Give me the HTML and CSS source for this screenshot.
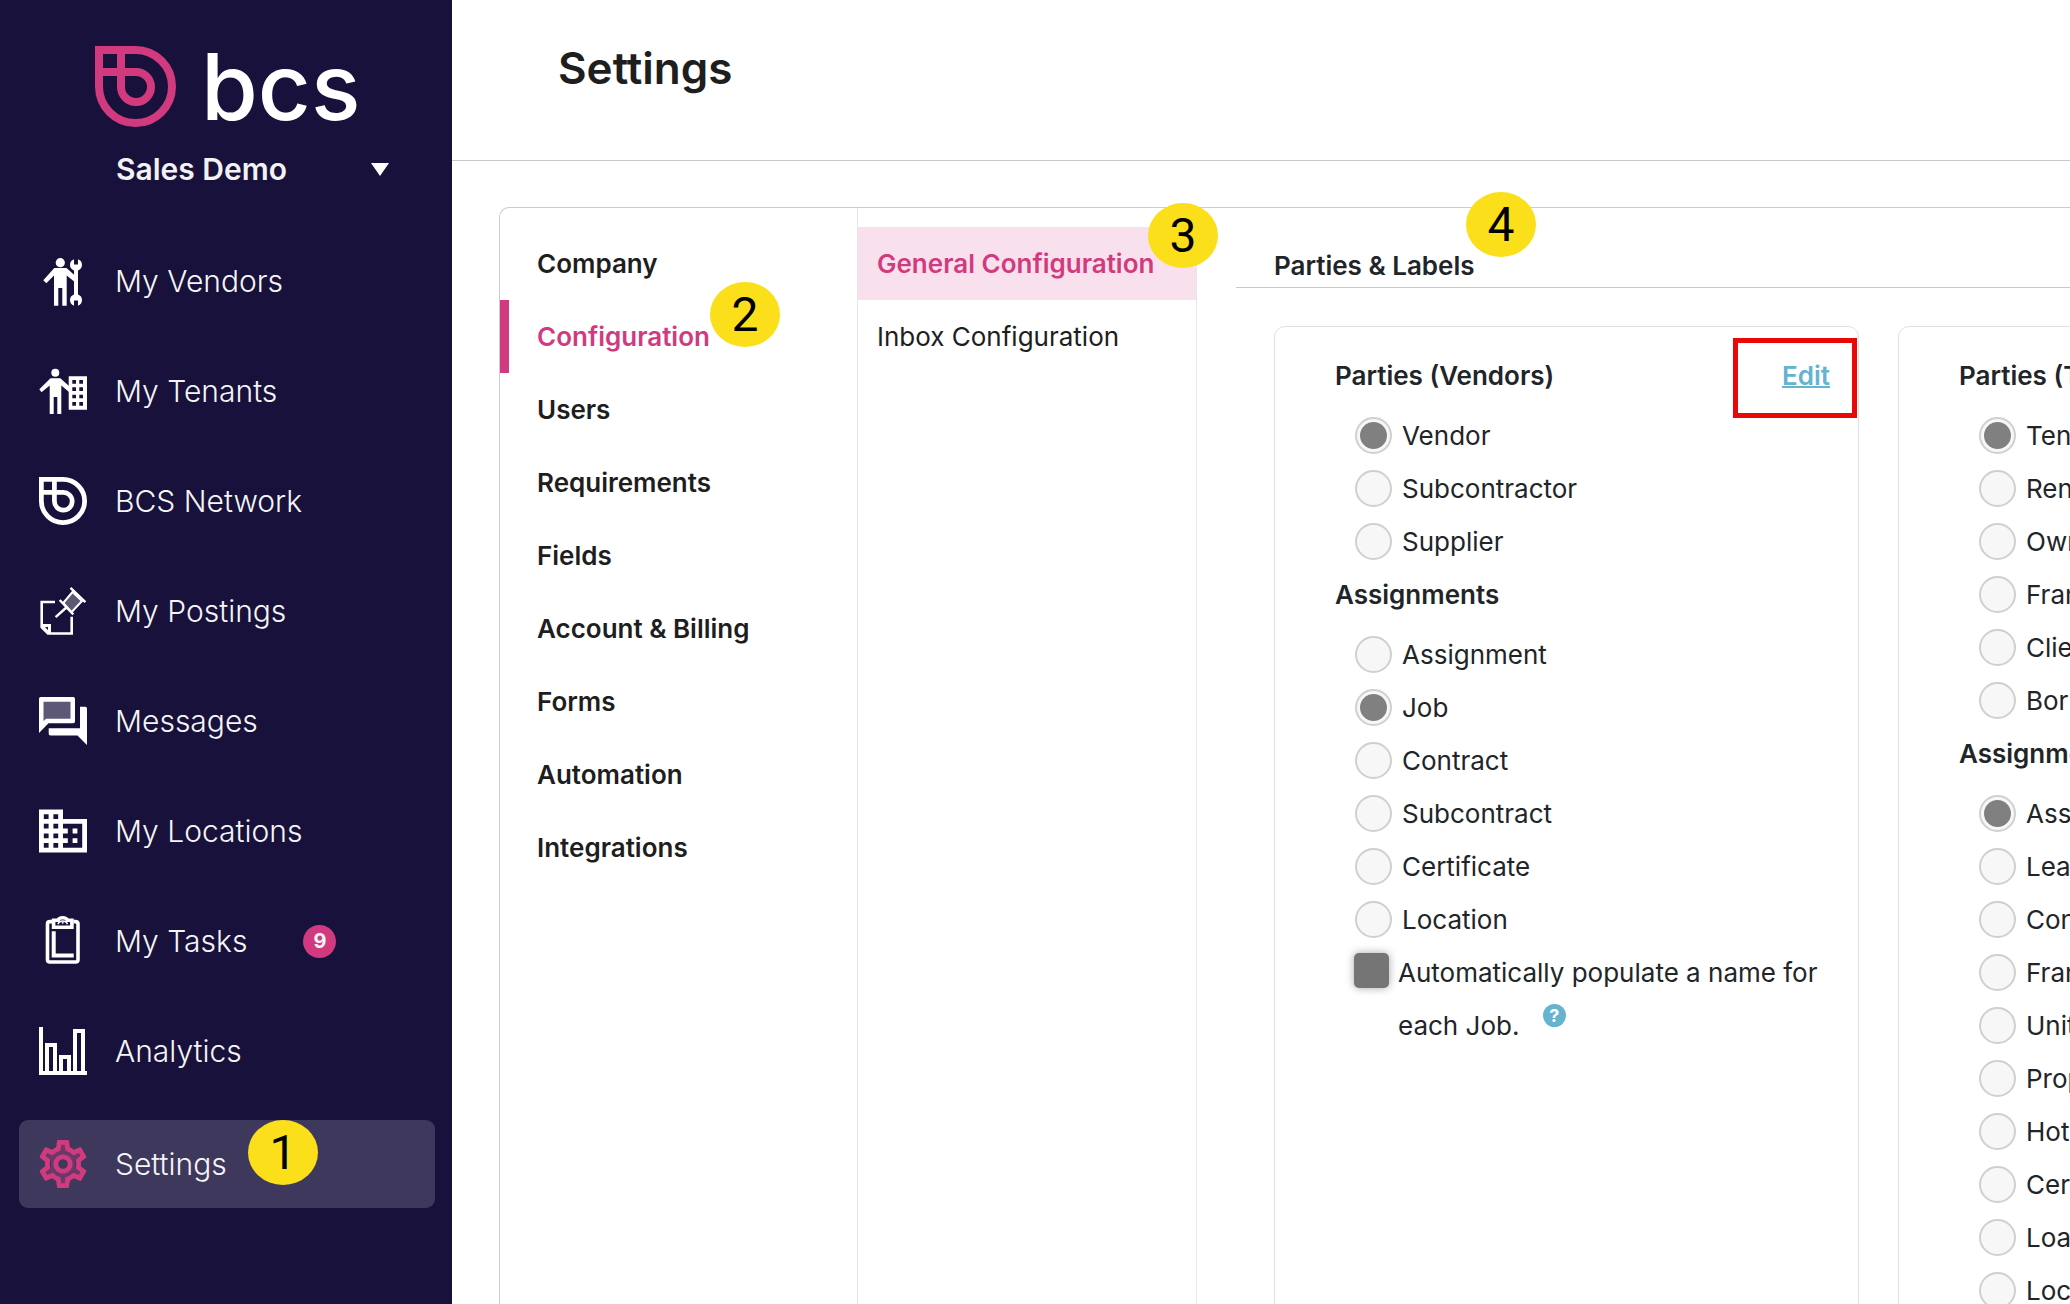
FILE: index.html
```html
<!DOCTYPE html>
<html lang="en">
<head>
    <meta charset="UTF-8">
    <meta name="viewport" content="width=device-width, initial-scale=1.0">
    <title>Settings - bcs</title>
    <link rel="stylesheet" href="styles.css">
</head>
<body>
    <!-- shared brand mark -->
    <svg class="sprite" aria-hidden="true">
        <symbol id="mark" viewBox="0 0 81 81">
            <g fill="none" stroke="currentColor" stroke-width="8">
                <path d="M4 4H40.5A36.5 36.5 0 1 1 4 40.5Z"/>
                <path d="M26 4V40.5A15 15 0 1 0 40.5 26H4"/>
            </g>
        </symbol>
    </svg>

    <aside class="sidebar">
        <div class="logo">
            <svg class="logo-mark"><use href="#mark"/></svg>
            <span class="logo-text">bcs</span>
        </div>
        <button type="button" class="account">
            <span>Sales Demo</span>
            <svg class="caret" viewBox="0 0 18 13"><path d="M0 0H18L9 13Z" fill="#fff"/></svg>
        </button>

        <nav class="menu">
            <a href="#" class="menu-item">
                <svg class="icon" viewBox="0 0 48 48" fill="#fff">
                    <circle cx="21.3" cy="5.7" r="4.6"/>
                    <path d="M15.3 11H27.5L37 19.5V26L27.7 18.5V48.7H23.3V31H19.3V48.7H15V18.5L7.3 26.3L4.3 23.3Z"/>
                    <path d="M35 2.2V7.5H39V2.2A6 6 0 0 1 39 13.5V37.4A6 6 0 0 1 39 48.7V43.4H35V48.7A6 6 0 0 1 35 37.4V13.5A6 6 0 0 1 35 2.2Z"/>
                </svg>
                <span>My Vendors</span>
            </a>
            <a href="#" class="menu-item">
                <svg class="icon" viewBox="0 0 48 48" fill="#fff">
                    <circle cx="16.3" cy="5.7" r="4"/>
                    <path d="M11.5 11.3H21.3L30 19V25L22.3 18.5V47H18.3V30H14.7V47H10.7V18.5L2.5 25.3L.3 22.3Z"/>
                    <path fill-rule="evenodd" d="M29.7 9.3H48V42.7H29.7ZM33.3 13V16.7H37V13ZM40.3 13V16.7H44V13ZM33.3 20.3V24H37V20.3ZM40.3 20.3V24H44V20.3ZM33.3 27.7V31.3H37V27.7ZM40.3 27.7V31.3H44V27.7ZM33.3 35V38.7H37V35ZM40.3 35V38.7H44V35Z"/>
                </svg>
                <span>My Tenants</span>
            </a>
            <a href="#" class="menu-item">
                <svg class="icon"><use href="#mark"/></svg>
                <span>BCS Network</span>
            </a>
            <a href="#" class="menu-item">
                <svg class="icon" viewBox="0 0 48 48" fill="none" stroke="#fff" stroke-width="2.6">
                    <path d="M16 15H2.7V40.3L9 46.5H32.7V29.7"/>
                    <path d="M2.7 38.5H10.5V46.5" stroke-width="3"/>
                    <path d="M4.5 40L9 44.5" stroke-width="2"/>
                    <path d="M24.2 16L33.5 5L43 14L32.5 25.2Z" fill="#fff" fill-opacity=".3" stroke-width="2"/>
                    <path d="M31.5 .9L46.4 15.2M20.7 13L34.3 27.3M16.6 30.2L28.5 19.5" stroke-width="2.4"/>
                </svg>
                <span>My Postings</span>
            </a>
            <a href="#" class="menu-item">
                <svg class="icon" viewBox="0 0 48 48" fill="#fff">
                    <path d="M4 4H32V22H8L4 24Z" fill-opacity=".3"/>
                    <path fill-rule="evenodd" d="M1.8 0H34.2A1.8 1.8 0 0 1 36 1.8V24.5A1.8 1.8 0 0 1 34.2 26.3H9.5L0 36V1.8A1.8 1.8 0 0 1 1.8 0ZM4.5 4.8V24L7 21.8H31.5V4.8Z"/>
                    <path d="M41 9.7H46.3A1.7 1.7 0 0 1 48 11.4V48L38.5 38.5H11.4A1.7 1.7 0 0 1 9.7 36.8V31.2H41Z"/>
                </svg>
                <span>Messages</span>
            </a>
            <a href="#" class="menu-item">
                <svg class="icon" viewBox="2 2 20 20" fill="#fff">
                    <path d="M12 7V3H2v18h20V7H12zM6 19H4v-2h2v2zm0-4H4v-2h2v2zm0-4H4V9h2v2zm0-4H4V5h2v2zm4 12H8v-2h2v2zm0-4H8v-2h2v2zm0-4H8V9h2v2zm0-4H8V5h2v2zm10 12h-8v-2h2v-2h-2v-2h2v-2h-2V9h8v10zm-2-8h-2v2h2v-2zm0 4h-2v2h2v-2z"/>
                </svg>
                <span>My Locations</span>
            </a>
            <a href="#" class="menu-item">
                <svg class="icon" viewBox="0 0 48 48" fill="none" stroke="#fff">
                    <path d="M13 4.6H11Q8.5 4.6 8.5 7V42.7Q8.5 45 11 45H36.5Q39 45 39 42.7V7Q39 4.6 36.5 4.6H34.5" stroke-width="3.6"/>
                    <path d="M14.6 3.2H19Q20 .8 23.7 .8T28.4 3.2H32.9V10.2H14.6Z" stroke-width="3.6"/>
                    <path d="M19 7.2Q20 4 23.7 4T28.4 7.2" stroke-width="1.5"/>
                    <circle cx="23.7" cy="5.8" r="1" fill="#fff" stroke="none"/>
                    <path d="M14.7 14.3V38.4H34.7" stroke-width="4"/>
                </svg>
                <span>My Tasks</span>
                <span class="count">9</span>
            </a>
            <a href="#" class="menu-item">
                <svg class="icon" viewBox="0 0 48 48" fill="none" stroke="#fff" stroke-width="4">
                    <path d="M2 0V46H48M8 46V18H16V46M22 46V30H30V46M36 46V4H44V46"/>
                </svg>
                <span>Analytics</span>
            </a>
            <a href="#" class="menu-item active">
                <svg class="icon" viewBox="2 2 20 20" fill="currentColor">
                    <path fill-opacity=".3" fill-rule="evenodd" d="M13 3.5h-2l-.5 3-1.800 1-2.900-1.100-1.100 1.900 2.300 2-.1 1.700.1 1.700-2.300 2 1.100 1.900 2.900-1.100 1.800 1 .5 3h2l.5-3 1.800-1 2.900 1.100 1.100-1.900-2.300-2 .1-1.700-.1-1.700 2.300-2-1.100-1.900-2.900 1.100-1.800-1zM12 9a3 3 0 1 1 0 6 3 3 0 0 1 0-6z"/>
                    <path d="M19.430 12.980c.04-.32.07-.64.07-.98 0-.34-.03-.66-.07-.98l2.110-1.650c.19-.15.24-.42.12-.64l-2-3.460c-.09-.16-.26-.25-.44-.25-.06 0-.12.01-.17.03l-2.490 1c-.52-.4-1.080-.73-1.690-.98l-.38-2.650C14.460 2.180 14.250 2 14 2h-4c-.25 0-.46.18-.49.42l-.38 2.650c-.61.25-1.170.59-1.690.98l-2.490-1c-.06-.02-.12-.03-.18-.03-.17 0-.34.09-.43.25l-2 3.460c-.13.22-.07.49.12.64l2.110 1.650c-.04.32-.07.65-.07.98 0 .33.03.66.07.98l-2.110 1.650c-.19.15-.24.42-.12.64l2 3.460c.09.16.26.25.44.25.06 0 .12-.01.17-.03l2.490-1c.52.4 1.080.73 1.690.98l.38 2.650c.03.24.24.42.49.42h4c.25 0 .46-.18.49-.42l.38-2.650c.61-.25 1.170-.59 1.690-.98l2.490 1c.06.02.12.03.18.03.17 0 .34-.09.43-.25l2-3.460c.12-.22.07-.49-.12-.64l-2.110-1.650zm-1.980-1.710c.04.31.05.52.05.73 0 .21-.02.43-.05.73l-.14 1.130.89.7 1.080.84-.7 1.210-1.270-.51-1.040-.42-.9.68c-.43.32-.84.56-1.250.73l-1.060.43-.16 1.130-.2 1.350h-1.400l-.19-1.350-.16-1.130-1.060-.43c-.43-.18-.83-.41-1.230-.71l-.91-.7-1.060.43-1.270.51-.7-1.210 1.080-.84.89-.7-.14-1.130c-.03-.31-.05-.54-.05-.74s.02-.43.05-.73l.14-1.130-.89-.7-1.080-.84.7-1.210 1.270.51 1.040.42.9-.68c.43-.32.84-.56 1.250-.73l1.060-.43.16-1.130.2-1.350h1.390l.19 1.350.16 1.130 1.060.43c.43.18.83.41 1.230.71l.91.7 1.060-.43 1.270-.51.7 1.210-1.070.85-.89.7.14 1.130zM12 8c-2.210 0-4 1.790-4 4s1.790 4 4 4 4-1.790 4-4-1.790-4-4-4zm0 6c-1.100 0-2-.9-2-2s.9-2 2-2 2 .9 2 2-.9 2-2 2z"/>
                </svg>
                <span>Settings</span>
            </a>
        </nav>
    </aside>

    <main class="main">
        <header class="page-header">
            <h1>Settings</h1>
        </header>

        <div class="panel">
            <nav class="tabs">
                <a href="#">Company</a>
                <a href="#" class="active">Configuration</a>
                <a href="#">Users</a>
                <a href="#">Requirements</a>
                <a href="#">Fields</a>
                <a href="#">Account &amp; Billing</a>
                <a href="#">Forms</a>
                <a href="#">Automation</a>
                <a href="#">Integrations</a>
            </nav>

            <nav class="subtabs">
                <a href="#" class="active">General Configuration</a>
                <a href="#">Inbox Configuration</a>
            </nav>

            <section class="content">
                <h2>Parties &amp; Labels</h2>
                <div class="cards">
                    <form class="card">
                        <div class="card-head">
                            <h3>Parties (Vendors)</h3>
                            <a href="#" class="edit">Edit</a>
                        </div>
                        <div class="options">
                            <label><input type="radio" name="vendorParty" checked>Vendor</label>
                            <label><input type="radio" name="vendorParty">Subcontractor</label>
                            <label><input type="radio" name="vendorParty">Supplier</label>
                        </div>
                        <h3>Assignments</h3>
                        <div class="options">
                            <label><input type="radio" name="vendorAssign">Assignment</label>
                            <label><input type="radio" name="vendorAssign" checked>Job</label>
                            <label><input type="radio" name="vendorAssign">Contract</label>
                            <label><input type="radio" name="vendorAssign">Subcontract</label>
                            <label><input type="radio" name="vendorAssign">Certificate</label>
                            <label><input type="radio" name="vendorAssign">Location</label>
                        </div>
                        <div class="auto-name">
                            <input type="checkbox" id="autoName">
                            <div>
                                <label for="autoName">Automatically populate a name for<br>each Job.</label>
                                <button type="button" class="help">?</button>
                            </div>
                        </div>
                    </form>

                    <form class="card">
                        <div class="card-head">
                            <h3>Parties (Tenants)</h3>
                        </div>
                        <div class="options">
                            <label><input type="radio" name="tenantParty" checked>Tenant</label>
                            <label><input type="radio" name="tenantParty">Renter</label>
                            <label><input type="radio" name="tenantParty">Owner</label>
                            <label><input type="radio" name="tenantParty">Franchisee</label>
                            <label><input type="radio" name="tenantParty">Client</label>
                            <label><input type="radio" name="tenantParty">Borrower</label>
                        </div>
                        <h3>Assignments</h3>
                        <div class="options">
                            <label><input type="radio" name="tenantAssign" checked>Assignment</label>
                            <label><input type="radio" name="tenantAssign">Lease</label>
                            <label><input type="radio" name="tenantAssign">Contract</label>
                            <label><input type="radio" name="tenantAssign">Franchise</label>
                            <label><input type="radio" name="tenantAssign">Unit</label>
                            <label><input type="radio" name="tenantAssign">Property</label>
                            <label><input type="radio" name="tenantAssign">Hotel</label>
                            <label><input type="radio" name="tenantAssign">Certificate</label>
                            <label><input type="radio" name="tenantAssign">Loan</label>
                            <label><input type="radio" name="tenantAssign">Location</label>
                        </div>
                    </form>
                </div>
            </section>
        </div>
    </main>

    <!-- walkthrough steps -->
    <span class="step step-1">1</span>
    <span class="step step-2">2</span>
    <span class="step step-3">3</span>
    <span class="step step-4">4</span>
    <span class="highlight"></span>
</body>
</html>
```

FILE: styles.css
```css
* {
    box-sizing: border-box;
}

body {
    position: relative;
    display: flex;
    height: 100vh;
    margin: 0;
    overflow: hidden;
    font-family: Inter, "Liberation Sans", sans-serif;
    font-size: 26px;
    color: #212529;
    background-color: #fff;
}

a {
    color: inherit;
    text-decoration: none;
}

h1, h2, h3 {
    margin: 0;
    font-weight: 600;
}

button {
    padding: 0;
    border: none;
    background: none;
    font-family: inherit;
    cursor: pointer;
}

.sprite {
    position: absolute;
    width: 0;
    height: 0;
}

/* sidebar */
.sidebar {
    flex: none;
    width: 452px;
    padding: 46px 17px 0 19px;
    background-color: #17113b;
    color: #f5f5f5;
}

.logo {
    display: flex;
    align-items: center;
    height: 81px;
    padding-left: 76px;
    gap: 25px;
}

.logo-mark {
    width: 81px;
    height: 81px;
    color: #d13a7f;
}

.logo-text {
    font-size: 92px;
    font-weight: 500;
    line-height: 80px;
    color: #fff;
}

.account {
    display: flex;
    align-items: center;
    justify-content: space-between;
    width: 100%;
    height: 84px;
    padding: 0 46px 0 97px;
    color: #f2f2f2;
    font-size: 30px;
    font-weight: 600;
}

.caret {
    width: 18px;
    height: 13px;
}

.menu {
    display: flex;
    flex-direction: column;
    gap: 22px;
    padding-top: 26px;
}

.menu-item {
    display: flex;
    align-items: center;
    height: 88px;
    padding-left: 20px;
    gap: 28px;
    border-radius: 9px;
    font-size: 30px;
    font-weight: 300;
}

.menu-item.active {
    margin-top: 3px;
    background-color: #3e385c;
}

.icon {
    flex: none;
    width: 48px;
    height: 48px;
    overflow: visible;
    color: #fff;
}

.active .icon {
    color: #d13a7f;
}

.count {
    width: 33px;
    margin-left: 28px;
    border-radius: 50%;
    background-color: #d13a7f;
    font-size: 20px;
    font-weight: 700;
    line-height: 33px;
    text-align: center;
}

/* main area */
.main {
    flex: 1;
    min-width: 0;
    display: flex;
    flex-direction: column;
}

.page-header {
    flex: none;
    height: 161px;
    padding: 38px 106px;
    border-bottom: 1px solid #c5c8cc;
}

.page-header h1 {
    color: #1e1e1e;
    font-size: 44px;
    line-height: 60px;
}

.panel {
    flex: 1 0 auto;
    display: flex;
    margin: 46px 0 0 47px;
    border: 1px solid #ccc;
    border-width: 1px 0 0 1px;
    border-radius: 10px 0 0 0;
}

.tabs,
.subtabs {
    flex: none;
    padding-top: 19px;
    border-right: 1px solid #e6e6e6;
    color: #1e1e1e;
    line-height: 73px;
}

.tabs {
    width: 358px;
    font-weight: 600;
}

.subtabs {
    width: 339px;
}

.tabs a,
.subtabs a {
    display: block;
}

.tabs a {
    padding-left: 28px;
    border-left: 9px solid transparent;
}

.tabs .active {
    border-left-color: #d13a7f;
    color: #d13a7f;
}

.subtabs a {
    padding-left: 19px;
}

.subtabs .active {
    background-color: #f8e1ec;
    color: #d13a7f;
    font-weight: 600;
}

.content {
    flex: 1;
    min-width: 0;
    margin-left: 39px;
    padding-top: 38px;
}

.content h2 {
    padding: 0 0 1px 38px;
    border-bottom: 1px solid #c8c8c8;
    font-size: 26px;
    line-height: 40px;
}

.cards {
    display: flex;
    gap: 39px;
    padding: 38px 0 0 38px;
}

.card {
    flex: none;
    width: 585px;
    padding: 22px 28px 28px 60px;
    border: 1px solid #e0e0e0;
    border-radius: 11px;
}

.card-head {
    display: flex;
    justify-content: space-between;
}

.card h3 {
    margin-bottom: 7px;
    font-size: 26px;
    line-height: 53px;
}

.edit {
    color: #64b3cf;
    font-weight: 600;
    line-height: 53px;
    text-decoration: underline;
    text-decoration-thickness: 2px;
}

.options {
    padding-left: 20px;
}

.options label {
    display: flex;
    align-items: center;
    height: 53px;
    gap: 10px;
}

input[type="radio"] {
    flex: none;
    appearance: none;
    display: grid;
    place-items: center;
    width: 37px;
    height: 37px;
    margin: 0;
    border: 2px solid #d0d0d0;
    border-radius: 50%;
    background-color: #f7f7f7;
}

input[type="radio"]:checked::before {
    content: "";
    width: 27px;
    height: 27px;
    border-radius: 50%;
    background-color: #808080;
}

.auto-name {
    display: flex;
    gap: 9px;
    padding-left: 19px;
    line-height: 53px;
}

input[type="checkbox"] {
    flex: none;
    appearance: none;
    width: 35px;
    height: 35px;
    margin: 7px 0 0;
    border-radius: 5px;
    background-color: #757575;
    box-shadow: 0 0 9px rgba(0, 0, 0, 0.35);
}

.help {
    width: 23px;
    height: 23px;
    margin-left: 16px;
    border-radius: 50%;
    background-color: #64b3cf;
    color: #fff;
    font-size: 18px;
    font-weight: 700;
    line-height: 23px;
    vertical-align: 13px;
}

/* walkthrough steps over the page */
.step {
    position: absolute;
    width: 70px;
    height: 65px;
    border-radius: 50%;
    background-color: #fbdf1b;
    color: #000;
    font-family: Roboto, sans-serif;
    font-size: 48px;
    line-height: 66px;
    text-align: center;
}

.step-1 {
    left: 248px;
    top: 1120px;
}

.step-2 {
    left: 710px;
    top: 282px;
}

.step-3 {
    left: 1148px;
    top: 203px;
}

.step-4 {
    left: 1466px;
    top: 192px;
}

.highlight {
    position: absolute;
    left: 1733px;
    top: 338px;
    width: 124px;
    height: 80px;
    border: 5px solid #e80808;
}
```
